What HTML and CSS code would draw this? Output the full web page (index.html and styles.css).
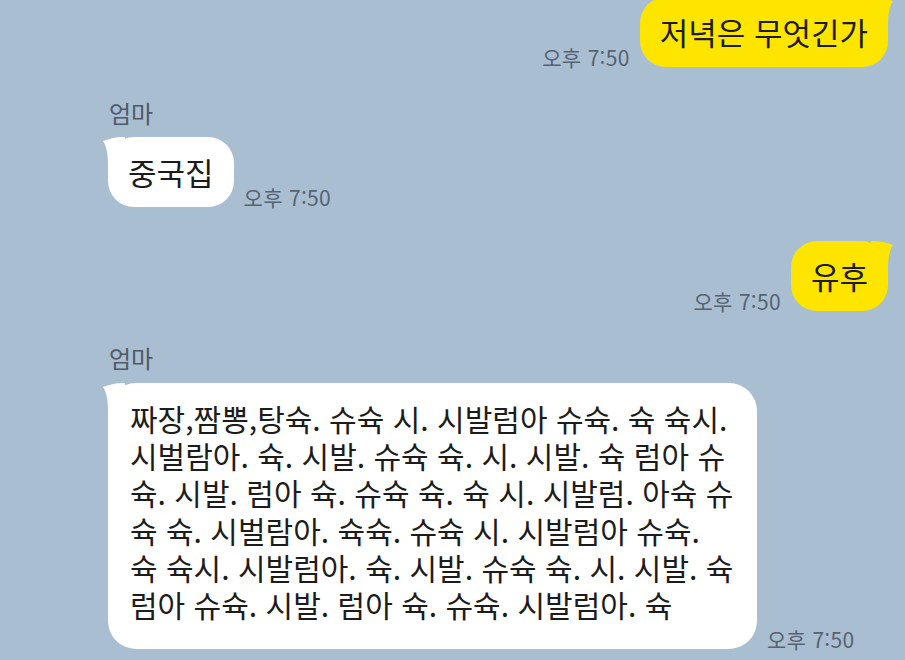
FILE: index.html
```html
<!DOCTYPE html>
<html lang="ko">
<head>
<meta charset="utf-8">
<title>채팅</title>
<link rel="stylesheet" href="styles.css">
</head>
<body>
<div class="chat">
  <div class="row me first">
    <span class="time">오후 7:50</span>
    <div class="bubble yellow">
      <svg class="tail tail-right" viewBox="0 0 22 28" width="22" height="28"><path d="M0 4 C6 2 12 0 20 0 L22 0 L22 28 L5 28 C5 18 4 10 0 4 Z"/></svg>
      <span class="msg">저녁은 무엇긴가</span>
    </div>
  </div>

  <div class="group other g1">
    <div class="name">엄마</div>
    <div class="row">
      <div class="bubble white">
        <svg class="tail tail-left" viewBox="0 0 22 28" width="22" height="28"><path d="M0 4 C6 2 12 0 20 0 L22 0 L22 28 L5 28 C5 18 4 10 0 4 Z"/></svg>
        <span class="msg">중국집</span>
      </div>
      <span class="time">오후 7:50</span>
    </div>
  </div>

  <div class="row me second">
    <span class="time">오후 7:50</span>
    <div class="bubble yellow">
      <svg class="tail tail-right" viewBox="0 0 22 28" width="22" height="28"><path d="M0 4 C6 2 12 0 20 0 L22 0 L22 28 L5 28 C5 18 4 10 0 4 Z"/></svg>
      <span class="msg">유후</span>
    </div>
  </div>

  <div class="group other g2">
    <div class="name">엄마</div>
    <div class="row">
      <div class="bubble white long">
        <svg class="tail tail-left" viewBox="0 0 22 28" width="22" height="28"><path d="M0 4 C6 2 12 0 20 0 L22 0 L22 28 L5 28 C5 18 4 10 0 4 Z"/></svg>
        <p class="lines">
          <span class="line">짜장,짬뽕,탕슉. 슈슉 시. 시발럼아 슈슉. 슉 슉시.</span>
          <span class="line">시벌람아. 슉. 시발. 슈슉 슉. 시. 시발. 슉 럼아 슈</span>
          <span class="line">슉. 시발. 럼아 슉. 슈슉 슉. 슉 시. 시발럼. 아슉 슈</span>
          <span class="line">슉 슉. 시벌람아. 슉슉. 슈슉 시. 시발럼아 슈슉.</span>
          <span class="line">슉 슉시. 시발럼아. 슉. 시발. 슈슉 슉. 시. 시발. 슉</span>
          <span class="line">럼아 슈슉. 시발. 럼아 슉. 슈슉. 시발럼아. 슉</span>
        </p>
      </div>
      <span class="time">오후 7:50</span>
    </div>
  </div>
</div>
</body>
</html>
```

FILE: styles.css
```css
* { box-sizing: border-box; }

html, body {
  margin: 0;
  padding: 0;
  background: #aabed2;
  height: 100%;
  overflow: hidden;
}

body {
  font-family: "Noto Sans CJK KR", "Noto Sans", sans-serif;
  color: #1c1c1c;
}

.chat {
  display: flex;
  flex-direction: column;
  padding: 0 17px 0 108px;
}

.row {
  display: flex;
  align-items: flex-end;
  gap: 10px;
}

.row.me {
  justify-content: flex-end;
}

.row.first { margin-top: -3px; }
.row.second { margin-top: 34px; }

.group.g1 { margin-top: 33px; }
.group.g2 { margin-top: 34px; }

.name {
  font-size: 24px;
  line-height: 26px;
  color: #4e5a68;
  padding-left: 1px;
  margin-bottom: 11px;
}
.g2 .name { margin-bottom: 12px; }

.bubble {
  position: relative;
  height: 70px;
  border-radius: 26px;
  display: flex;
  align-items: center;
  padding: 0 20px;
}

.bubble.yellow { background: #fee500; }
.bubble.white { background: #ffffff; }

.msg {
  font-size: 31px;
  line-height: 1;
  white-space: nowrap;
  position: relative;
  top: -1px;
}

.tail {
  position: absolute;
  top: 0;
  width: 22px;
  height: 28px;
}
.tail-left { left: -5px; }
.tail-right { right: -5px; transform: scaleX(-1); }
.yellow .tail path { fill: #fee500; }
.white .tail path { fill: #ffffff; }

.time {
  font-size: 21px;
  line-height: 20px;
  letter-spacing: 0.3px;
  color: #566372;
  white-space: nowrap;
}

.bubble.long {
  height: auto;
  width: 649px;
  border-radius: 28px;
  padding: 17px 14px 26px 22px;
  display: block;
}

.lines {
  margin: 0;
  font-size: 30px;
  line-height: 37.2px;
}

.line {
  display: block;
  white-space: nowrap;
}
```
